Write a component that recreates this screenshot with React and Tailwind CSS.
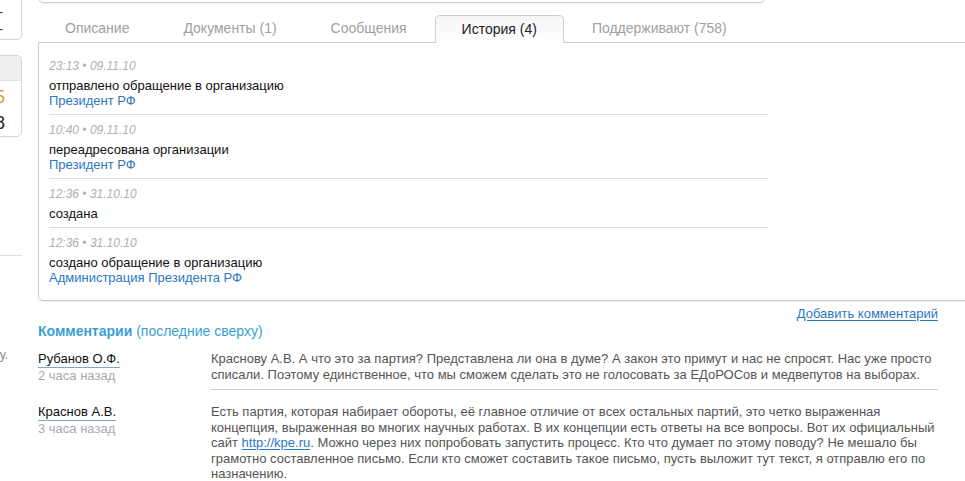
import React from 'react'

const history = [
  { time: '23:13 • 09.11.10', text: 'отправлено обращение в организацию', link: 'Президент РФ' },
  { time: '10:40 • 09.11.10', text: 'переадресована организации', link: 'Президент РФ' },
  { time: '12:36 • 31.10.10', text: 'создана' },
  { time: '12:36 • 31.10.10', text: 'создано обращение в организацию', link: 'Администрация Президента РФ' },
]

const tabs = ['Описание', 'Документы (1)', 'Сообщения', 'История (4)', 'Поддерживают (758)']

export default function App() {
  return (
    <div
      className="w-[965px] h-[481px] overflow-hidden bg-white flex items-start text-[13px] text-black"
      style={{ fontFamily: '"Liberation Sans", Arial, sans-serif' }}
    >
      {/* Left sidebar (cut off) */}
      <div className="w-[200px] -ml-[178px] shrink-0 flex flex-col">
        <div className="shrink-0 -mt-[10px] h-[50px] border border-[#d6d6d6] rounded-br-[5px] flex flex-col items-end pr-[18px] text-[#333] leading-[17px] pt-[12px]">
          <span>-</span>
          <span>-</span>
        </div>
        <div className="shrink-0 mt-[15px] h-[82px] border border-[#d6d6d6] rounded-r-[5px] overflow-hidden">
          <div className="h-[25px] bg-[#efefef] border-b border-[#e2e2e2]" />
          <div className="flex flex-col items-end pr-[16px] text-[18px] leading-[26px] pt-[3px]">
            <span className="text-[#d99a2b]">5</span>
            <span className="text-[#222]">8</span>
          </div>
        </div>
        <div className="shrink-0 mt-[118px] h-px bg-[#dddddd]" />
        <div className="shrink-0 mt-[90px] text-right pr-[14px] text-[#888] text-[12px]">у.</div>
      </div>

      {/* Main column */}
      <div className="ml-[16px] w-[960px] shrink-0 flex flex-col">
        <div className="shrink-0 -mt-[20px] h-[23px] w-[727px] border border-[#d0d0d0] rounded-b-[5px] shadow-[0_1px_1px_rgba(0,0,0,0.06)]" />

        {/* Tabs */}
        <div className="shrink-0 mt-[12px] h-[28px] flex items-stretch gap-[2px] pl-px border-b border-[#cccccc] text-[14px]">
          {tabs.map((t, i) =>
            i === 3 ? (
              <div
                key={t}
                className="-mb-px px-[26px] flex items-center text-[#222] bg-gradient-to-b from-[#f6f6f6] to-white border border-b-0 border-[#cfcfcf] rounded-t-[5px]"
              >
                {t}
              </div>
            ) : (
              <div key={t} className="px-[26px] flex items-center text-[#a0a0a0]">
                {t}
              </div>
            )
          )}
        </div>

        {/* History panel */}
        <div className="shrink-0 border-x border-b border-[#cccccc] rounded-bl-[5px] pl-[10px] pt-[8px] pb-[9px] shadow-[0_1px_2px_rgba(0,0,0,0.08)]">
          {history.map((h, i) => (
            <div
              key={i}
              className={`w-[719px] pt-[8px] pb-[6px] leading-[15px] ${i < history.length - 1 ? 'border-b border-[#dcdcdc]' : ''}`}
            >
              <div className="italic text-[12px] text-[#b0b0b0]">{h.time}</div>
              <div className="mt-[4px] text-[#111]">{h.text}</div>
              {h.link && <div className="text-[#2b78c2]">{h.link}</div>}
            </div>
          ))}
        </div>

        {/* Comments */}
        <div className="shrink-0 w-[900px] flex flex-col">
          <div className="mt-[5px] flex justify-end leading-[15px]">
            <a className="text-[#2b78c2] underline underline-offset-2">Добавить комментарий</a>
          </div>
          <div className="mt-[1px] text-[14px] leading-[18px] text-[#3a9fd6]">
            <span className="font-bold">Комментарии</span> (последние сверху)
          </div>

          <div className="mt-[11px] flex">
            <div className="w-[173px] shrink-0 flex flex-col items-start leading-[16px]">
              <span className="text-[#111] border-b border-[#7ea6cf]">Рубанов О.Ф.</span>
              <span className="text-[#aaaaaa]">2 часа назад</span>
            </div>
            <div className="flex-1 text-[#555] leading-[16px] pb-[6px] border-b border-[#cccccc] whitespace-nowrap">
              Краснову А.В. А что это за партия? Представлена ли она в думе? А закон это примут и нас не спросят. Нас уже просто
              <br />
              списали. Поэтому единственное, что мы сможем сделать это не голосовать за ЕДоРОСов и медвепутов на выборах.
            </div>
          </div>

          <div className="mt-[14px] flex">
            <div className="w-[173px] shrink-0 flex flex-col items-start leading-[16px]">
              <span className="text-[#111] border-b border-[#7ea6cf]">Краснов А.В.</span>
              <span className="text-[#aaaaaa]">3 часа назад</span>
            </div>
            <div className="flex-1 text-[#555] leading-[15.5px] whitespace-nowrap">
              Есть партия, которая набирает обороты, её главное отличие от всех остальных партий, это четко выраженная
              <br />
              концепция, выраженная во многих научных работах. В их концепции есть ответы на все вопросы. Вот их официальный
              <br />
              сайт <a className="text-[#2b78c2] underline underline-offset-2">http://kpe.ru</a>. Можно через них попробовать запустить процесс. Кто что думает по этому поводу? Не мешало бы
              <br />
              грамотно составленное письмо. Если кто сможет составить такое письмо, пусть выложит тут текст, я отправлю его по
              <br />
              назначению.
            </div>
          </div>
        </div>
      </div>
    </div>
  )
}
